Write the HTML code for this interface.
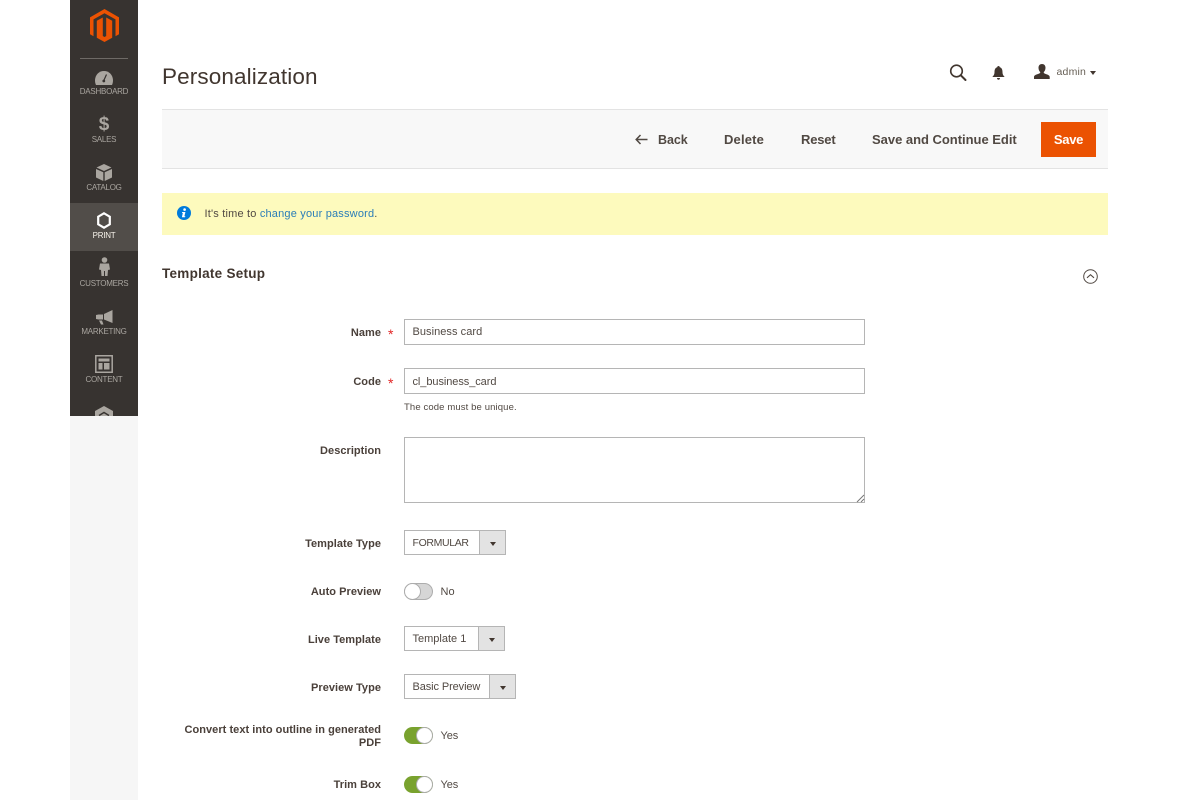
<!DOCTYPE html>
<html lang="en">
<head>
<meta charset="utf-8">
<title>Personalization</title>
<style>
html,body{margin:0;padding:0;width:1200px;height:800px;overflow:hidden;background:#fff;font-family:"Liberation Sans",sans-serif;color:#41362f}
#p{position:relative;width:1200px;height:800px;overflow:hidden;filter:blur(.35px)}
.a{position:absolute}
.t{position:absolute;white-space:nowrap;line-height:1}
.lbl{position:absolute;right:819px;margin-top:1px;text-align:right;font-weight:bold;font-size:11px;line-height:13px;color:#4a403a;letter-spacing:.04px}
.nav{position:absolute;left:70px;width:68px;text-align:center;font-size:8px;line-height:10px;color:#aaa6a0;letter-spacing:-.25px}
.inp{position:absolute;box-sizing:border-box;border:1px solid #b5b5b5;background:#fff;left:404px}
.sel{position:absolute;box-sizing:border-box;border:1px solid #b5b5b5;left:404px;height:25px;background:#fff}
.sel b{position:absolute;right:0;top:0;bottom:0;width:26px;background:#e3e3e3;border-left:1px solid #b5b5b5;box-sizing:border-box}
.sel b:after{content:"";position:absolute;left:9.500px;top:10.500px;border:3.500px solid transparent;border-top:4px solid #41362f;border-bottom:0}
.val{font-size:11px;color:#514943}
.tog{position:absolute;left:404px;width:29px;height:17px;border-radius:9px;box-sizing:border-box}
.tog i{position:absolute;top:0;width:17px;height:17px;border-radius:50%;background:#fff;border:1px solid #adadad;box-sizing:border-box}
.btn{font-size:13px;font-weight:bold;color:#514943}
</style>
</head>
<body>
<div id="p">
  <div class="a" style="left:70px;top:416px;width:68px;height:384px;background:#f6f6f6"></div>
  <div class="a" style="left:70px;top:0;width:68px;height:416px;background:#373330"></div>
  <div class="a" style="left:70px;top:203px;width:68px;height:48px;background:#514d49"></div>

  <svg class="a" style="left:90px;top:9px" width="29" height="33" viewBox="0 0 29 33">
    <path fill="#eb5202" d="M14.500 0 29 8.400V25.200L25.500 27.200V10.400L14.500 4.200 3.500 10.400V27.200L0 25.200V8.400Z"/>
    <path fill="#eb5202" d="M12.800 8.500 6.800 11.800V28.800L14.500 33 22.200 28.800V11.800L16.200 8.500V27L14.500 28 12.800 27Z"/>
  </svg>
  <div class="a" style="left:80px;top:58px;width:48px;height:1px;background:#6e6a66"></div>

  <svg class="a" style="left:95px;top:71px" width="18" height="14" viewBox="0 0 18 14"><path fill="#aaa6a0" d="M9 0C4 0 .3 3.700 0 9c0 2 .3 3.500 1 5h16c.7-1.500 1-3 1-5C17.700 3.700 14 0 9 0Z"/><path stroke="#373330" stroke-width="1.200" d="M11.500 3.500 8.800 9.500"/><circle cx="8.800" cy="10" r="1.400" fill="#373330"/></svg>
  <div class="nav" style="top:87px">DASHBOARD</div>

  <div class="t" style="left:70px;width:68px;text-align:center;top:115px;font-size:19px;font-weight:bold;color:#aaa6a0">$</div>
  <div class="nav" style="top:135px">SALES</div>

  <svg class="a" style="left:96px;top:164px" width="16" height="17" viewBox="0 0 16 17"><path fill="#aaa6a0" d="M8 0l7.500 3.500L8 7 .5 3.500ZM0 5l7.300 3.300V17L0 13.500ZM16 5 8.700 8.300V17l7.300-3.500Z"/></svg>
  <div class="nav" style="top:183px">CATALOG</div>

  <svg class="a" style="left:97px;top:212px" width="14" height="17" viewBox="0 0 14 17"><path fill="none" stroke="#fff" stroke-width="2.200" d="M7 1.300 12.800 4.700v7.600L7 15.700 1.200 12.300V4.700Z"/></svg>
  <div class="nav" style="top:231px;color:#f7f3eb">PRINT</div>

  <svg class="a" style="left:99px;top:257px" width="11" height="19" viewBox="0 0 11 19"><circle cx="5.500" cy="3" r="2.800" fill="#aaa6a0"/><path fill="#aaa6a0" d="M1 6.500h9l1 6-2 .5-.5 6H6V14H5v5H2.500L2 13l-2-.5Z"/></svg>
  <div class="nav" style="top:279px">CUSTOMERS</div>

  <svg class="a" style="left:95px;top:310px" width="18" height="15" viewBox="0 0 18 15"><path fill="#aaa6a0" d="M17.500 0v13L9 9.500V4Z M8 4.500v5H3.500L1 9V5l2.500-.5Z M4 10.500h3l1.500 4H6Z"/></svg>
  <div class="nav" style="top:327px">MARKETING</div>

  <svg class="a" style="left:95px;top:355px" width="18" height="18" viewBox="0 0 18 18"><path fill="none" stroke="#aaa6a0" stroke-width="1.500" d="M.8.800h16.400v16.400H.8Z"/><path fill="#aaa6a0" d="M3.500 3.500h11v3h-11ZM3.500 8h4v6.500h-4ZM9 8h5.500v6.500H9Z"/></svg>
  <div class="nav" style="top:375px">CONTENT</div>

  <div class="a" style="left:90px;top:404px;width:28px;height:12px;overflow:hidden">
    <svg class="a" style="left:5px;top:2px" width="18" height="20" viewBox="0 0 18 20"><path fill="#aaa6a0" d="M9 0l9 5v10l-9 5-9-5V5Z"/><path fill="none" stroke="#373330" stroke-width="1.500" d="M4 9.500 9 6.500l5 3"/></svg>
  </div>

  <div class="t" style="left:162px;top:64px;font-size:22.500px;line-height:25px;color:#41362f;letter-spacing:.12px">Personalization</div>

  <svg class="a" style="left:949px;top:64px" width="19" height="18" viewBox="0 0 19 18"><circle cx="7.500" cy="7" r="5.800" fill="none" stroke="#41362f" stroke-width="1.600"/><path stroke="#41362f" stroke-width="2" stroke-linecap="round" d="M11.800 11.300 16.500 16"/></svg>
  <svg class="a" style="left:992px;top:66px" width="13" height="14" viewBox="0 0 13 14"><path fill="#41362f" d="M6.500 0C7.300 0 7.700.5 7.800 1.200 9.800 1.800 10.500 3.500 10.500 6c0 2.500.8 3.500 2.200 5H.3C1.700 9.500 2.500 8.500 2.500 6c0-2.500.7-4.200 2.700-4.800C5.300.5 5.700 0 6.500 0ZM5 12h3c0 1-.6 1.700-1.500 1.700S5 13 5 12Z"/></svg>
  <svg class="a" style="left:1034px;top:64px" width="16" height="15" viewBox="0 0 16 15"><path fill="#41362f" d="M8 0c2.200 0 3.500 1.500 3.500 3.800 0 2-.8 3.500-1.800 4.300 0 1 .6 1.400 2 1.900 2 .7 4 1.300 4 3V15H0v-2c0-1.700 2-2.300 4-3 1.500-.5 2.300-.9 2.300-1.900-1-.8-1.800-2.300-1.800-4.300C4.500 1.500 5.800 0 8 0Z"/></svg>
  <div class="t" style="left:1056.500px;top:67px;font-size:10.500px;color:#676056;letter-spacing:.2px">admin</div>
  <div class="a" style="left:1090px;top:70.500px;border:3.500px solid transparent;border-top:4px solid #41362f;border-bottom:0"></div>

  <div class="a" style="left:162px;top:109px;width:946px;height:60px;box-sizing:border-box;background:#f8f8f8;border-top:1px solid #e3e3e3;border-bottom:1px solid #e3e3e3"></div>
  <svg class="a" style="left:635px;top:134px" width="13" height="11" viewBox="0 0 13 11"><path fill="none" stroke="#514943" stroke-width="1.500" d="M12.500 5.500H1.500M5.500 1 1.200 5.500 5.500 10"/></svg>
  <div class="t btn" style="left:658px;top:134px;font-size:12.500px;letter-spacing:-.05px">Back</div>
  <div class="t btn" style="left:724px;top:133px;letter-spacing:.17px">Delete</div>
  <div class="t btn" style="left:801px;top:133px;letter-spacing:-.18px">Reset</div>
  <div class="t btn" style="left:872px;top:133px;letter-spacing:-.02px">Save and Continue Edit</div>
  <div class="a" style="left:1041px;top:122px;width:55px;height:35px;background:#eb5202"></div>
  <div class="t btn" style="left:1041px;width:55px;text-align:center;top:133px;color:#fff;letter-spacing:-.3px">Save</div>

  <div class="a" style="left:162px;top:193px;width:946px;height:42px;background:#fdfabd"></div>
  <svg class="a" style="left:177px;top:206px" width="14" height="14" viewBox="0 0 14 14"><circle cx="7" cy="7" r="7" fill="#007bdb"/><circle cx="7.600" cy="3.600" r="1.300" fill="#fff"/><path fill="#fff" d="M5.200 6h3.200l-1 4.300h1L8 11.300H4.900l.9-4.300h-.8Z"/></svg>
  <div class="t" style="left:204.500px;top:209px;font-size:11px;color:#514943;letter-spacing:.19px">It's time to <span style="color:#2a7db8">change your password</span>.</div>

  <div class="t" style="left:162px;top:267px;font-size:13.500px;font-weight:bold;color:#41362f;letter-spacing:.27px">Template Setup</div>
  <svg class="a" style="left:1083px;top:269px" width="15" height="15" viewBox="0 0 15 15"><circle cx="7.500" cy="7.500" r="6.800" fill="none" stroke="#514943" stroke-width="1"/><path fill="none" stroke="#514943" stroke-width="1.100" d="M4 8.800 7.500 5.700 11 8.800"/></svg>

  <div class="lbl" style="top:326px">Name</div>
  <div class="t" style="left:388px;top:327px;font-size:14px;color:#e22626">*</div>
  <div class="inp" style="top:319px;width:461px;height:26px"></div>
  <div class="t val" style="left:412.500px;top:327px;letter-spacing:.05px">Business card</div>

  <div class="lbl" style="top:375px">Code</div>
  <div class="t" style="left:388px;top:376px;font-size:14px;color:#e22626">*</div>
  <div class="inp" style="top:368px;width:461px;height:26px"></div>
  <div class="t val" style="left:412.500px;top:376.500px;letter-spacing:-.07px">cl_business_card</div>
  <div class="t" style="left:404px;top:403px;font-size:9.500px;color:#514943;letter-spacing:.12px">The code must be unique.</div>

  <div class="lbl" style="top:444px">Description</div>
  <div class="inp" style="top:437px;width:461px;height:66px"></div>
  <svg class="a" style="left:856px;top:494px" width="9" height="9" viewBox="0 0 9 9"><path stroke="#777" stroke-width="1" d="M1 8 8 1M5 8 8 5"/></svg>

  <div class="lbl" style="top:537px">Template Type</div>
  <div class="sel" style="top:530px;width:102px"><b></b></div>
  <div class="t val" style="left:412.500px;top:537.500px;font-size:10.500px;letter-spacing:-.35px">FORMULAR</div>

  <div class="lbl" style="top:585px">Auto Preview</div>
  <div class="tog" style="top:583px;background:#d6d6d6;border:1px solid #adadad"><i style="left:-1px;top:-1px"></i></div>
  <div class="t val" style="left:440.500px;top:586.500px">No</div>

  <div class="lbl" style="top:633px">Live Template</div>
  <div class="sel" style="top:626px;width:101px"><b></b></div>
  <div class="t val" style="left:412.500px;top:633.500px">Template 1</div>

  <div class="lbl" style="top:681px">Preview Type</div>
  <div class="sel" style="top:674px;width:112px"><b></b></div>
  <div class="t val" style="left:412.500px;top:681.500px;letter-spacing:-.1px">Basic Preview</div>

  <div class="lbl" style="top:723px">Convert text into outline in generated<br>PDF</div>
  <div class="tog" style="top:727px;background:#79a22e"><i style="left:12px"></i></div>
  <div class="t val" style="left:440.500px;top:730.500px;letter-spacing:-.1px">Yes</div>

  <div class="lbl" style="top:778px">Trim Box</div>
  <div class="tog" style="top:776px;background:#79a22e"><i style="left:12px"></i></div>
  <div class="t val" style="left:440.500px;top:779.500px;letter-spacing:-.1px">Yes</div>
</div>
</body>
</html>
